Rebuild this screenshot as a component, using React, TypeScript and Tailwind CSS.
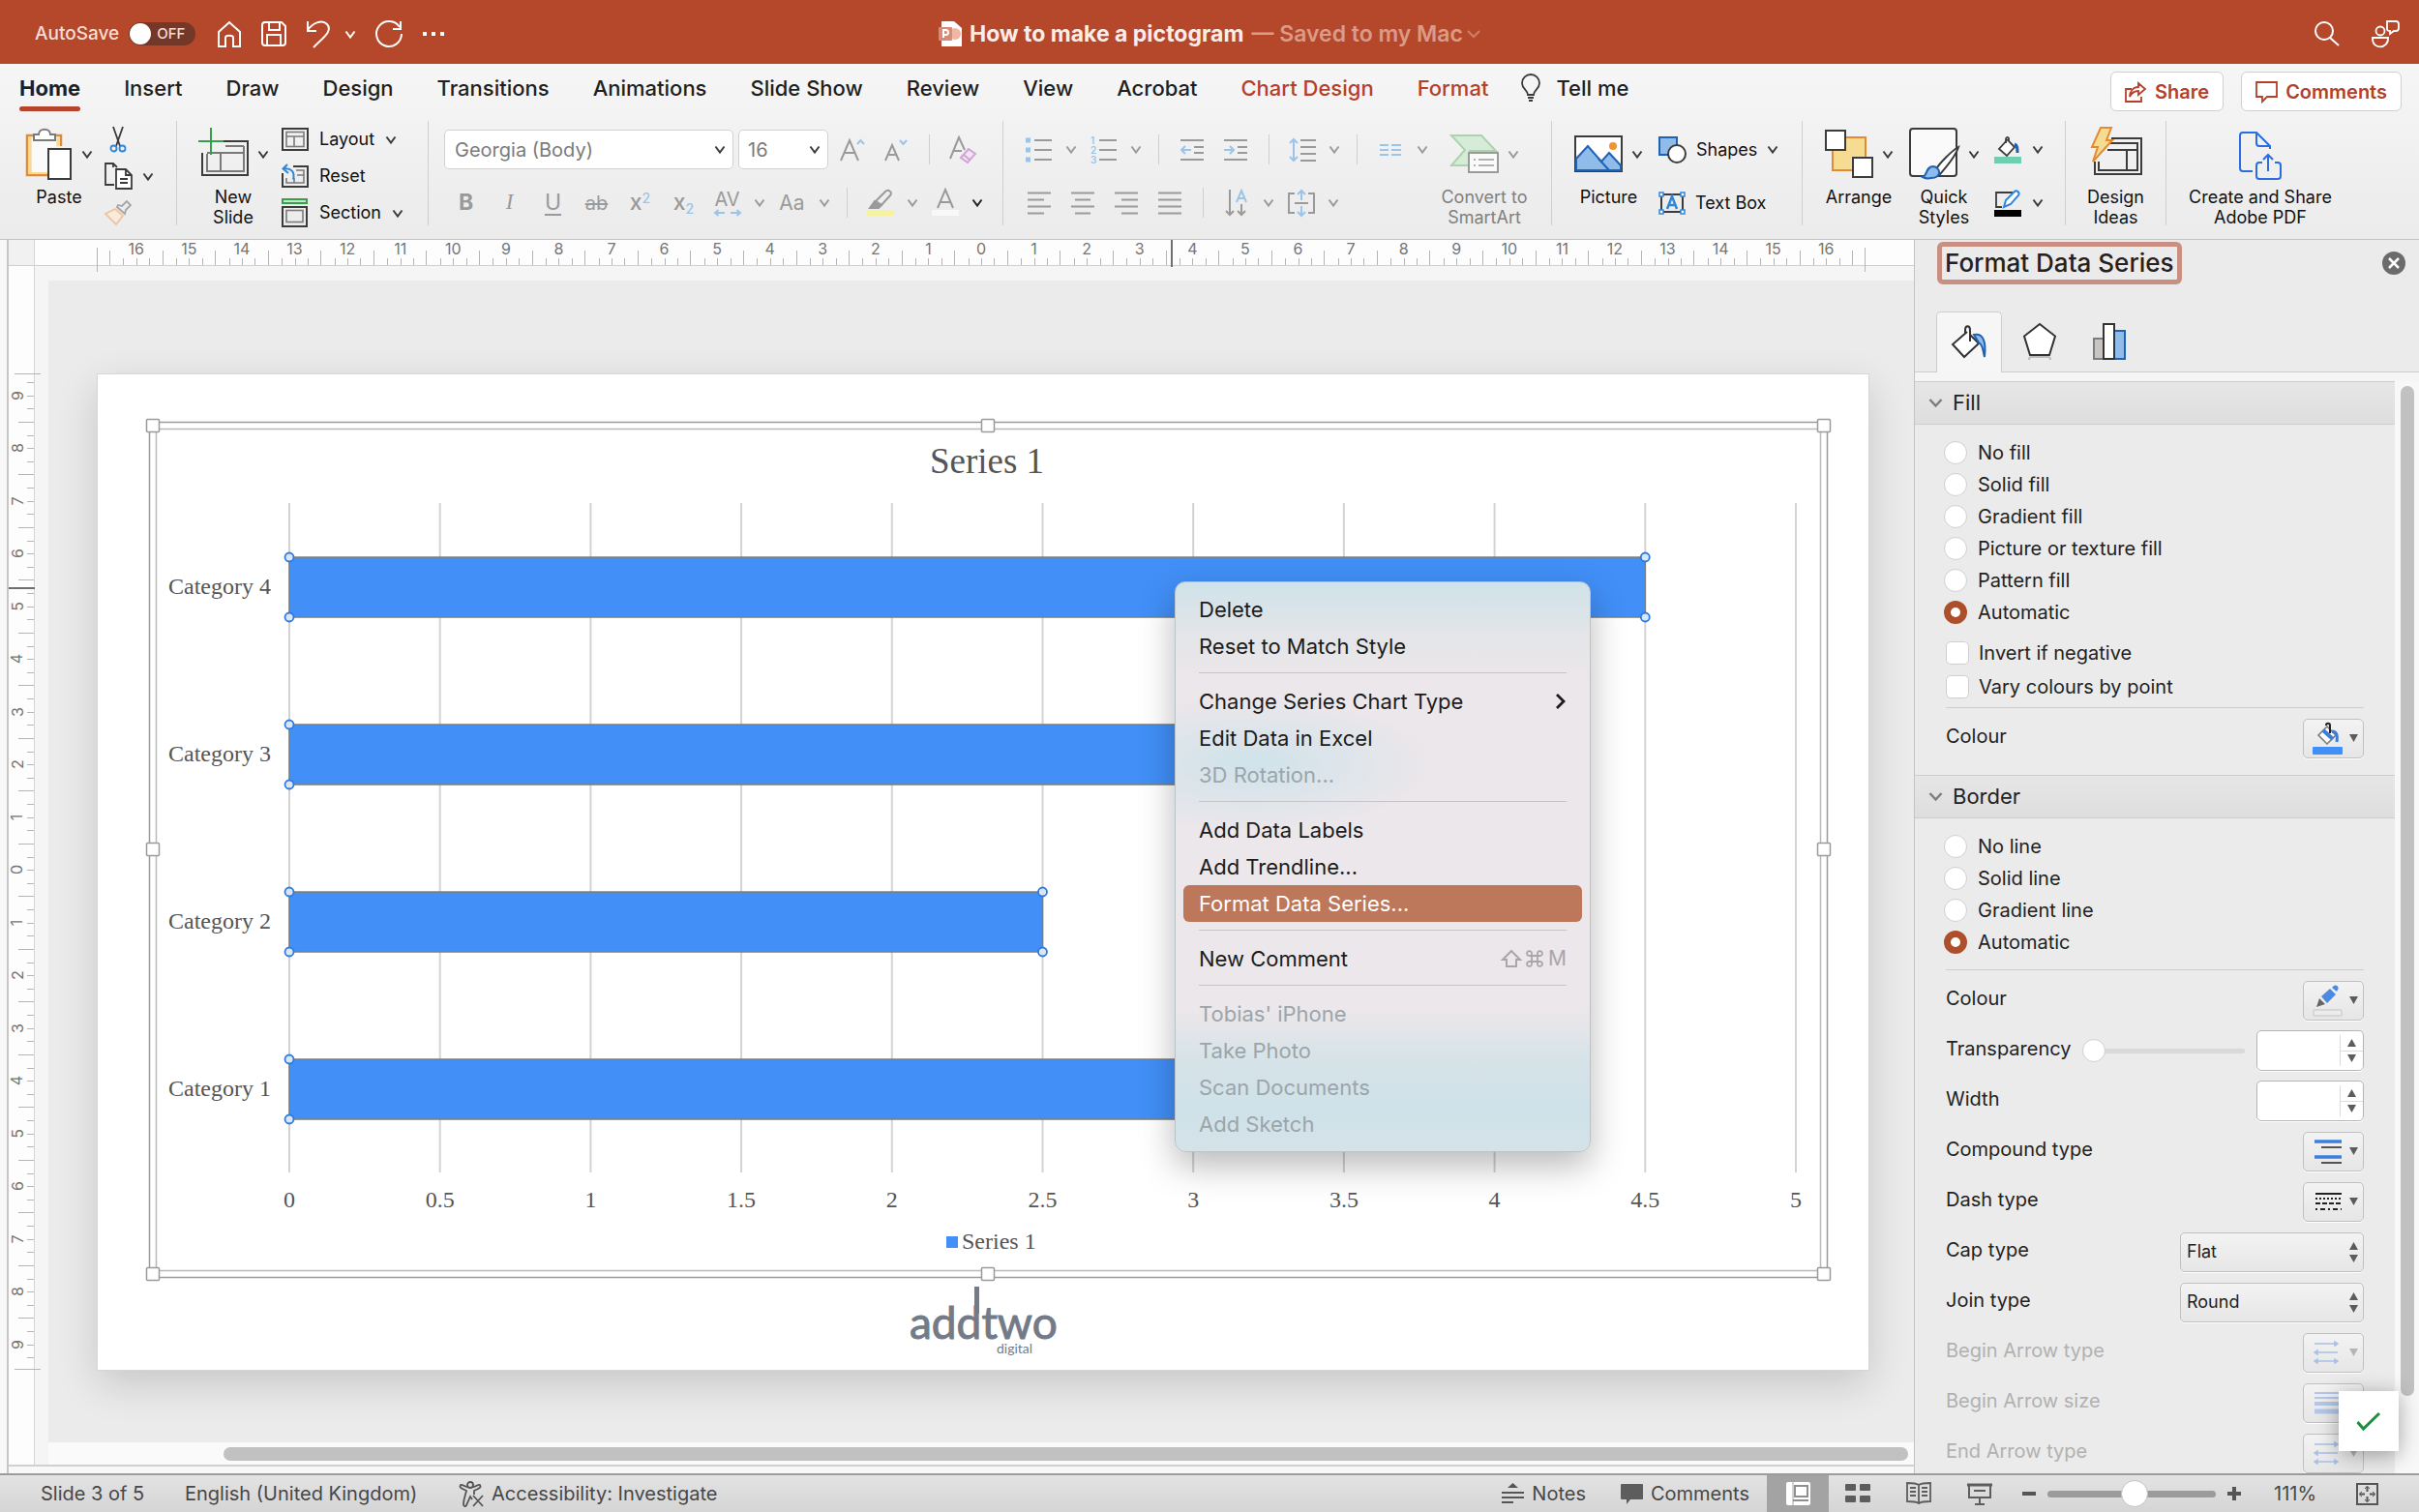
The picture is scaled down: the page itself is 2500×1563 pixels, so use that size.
import { useState, ReactNode } from 'react';

const tabs = [
  'Home', 'Insert', 'Draw', 'Design', 'Transitions', 'Animations', 'Slide Show',
  'Review', 'View', 'Acrobat', 'Chart Design', 'Format',
];

const hNumbers = Array.from({ length: 33 }, (_, i) => Math.abs(i - 16));
const vNumbers = Array.from({ length: 19 }, (_, i) => Math.abs(i - 9));

interface IconProps {
  w: number;
  h: number;
  stroke?: string;
  sw?: number;
  children: ReactNode;
}

function Icon({ w, h, stroke = '#3b3b3b', sw = 2, children }: IconProps) {
  return (
    <svg width={w} height={h} viewBox={`0 0 ${w} ${h}`} fill="none" stroke={stroke} strokeWidth={sw} className="shrink-0 overflow-visible" aria-hidden="true">
      {children}
    </svg>
  );
}

function Caret({ color = '#3b3b3b' }: { color?: string }) {
  return (
    <Icon w={12} h={9} stroke={color} sw={2}>
      <path d="M1.5 1.5 6 7.5l4.5-6" />
    </Icon>
  );
}

/* ---------- Ribbon building blocks ---------- */

function Separator() {
  return <div className="h-[108px] w-px shrink-0 bg-[#cfcfcf]" />;
}

function BigTool({ icon, label, caret = true, dim = false, className }: {
  icon: ReactNode; label: ReactNode; caret?: boolean; dim?: boolean; className: string;
}) {
  return (
    <button className={`flex shrink-0 flex-col items-center text-lg leading-[21px] ${dim ? 'text-[#808080]' : 'text-[#111]'} ${className}`}>
      <span className="flex h-[68px] items-center gap-[9px]">
        {icon}
        {caret && <Caret color={dim ? '#9a9a9a' : '#3b3b3b'} />}
      </span>
      <span>{label}</span>
    </button>
  );
}

function Slot({ label, children }: { label: string; children: ReactNode }) {
  return <button aria-label={label} className="flex h-full w-[45px] shrink-0 items-center justify-center">{children}</button>;
}

function CaretSlot({ color = '#9a9a9a' }: { color?: string }) {
  return <span className="flex w-[22px] shrink-0 justify-center"><Caret color={color} /></span>;
}

function MiniSep() {
  return <span className="flex w-6 shrink-0 justify-center"><span className="h-[31px] w-px bg-[#cfcfcf]" /></span>;
}

function AlignIcon({ lines }: { lines: [number, number][] }) {
  return (
    <Icon w={26} h={24} stroke="#9a9a9a">
      {lines.map(([a, b], i) => <path key={i} d={`M${a} ${i * 7 + 1.5}H${b}`} />)}
    </Icon>
  );
}

function LayoutIcon() {
  return (
    <Icon w={28} h={24}>
      <rect x="1" y="1" width="26" height="22" />
      <g stroke="#7a7a7a" strokeWidth="1.6"><rect x="5" y="4.500" width="18" height="15" /><path d="M5 9h18M13 9v10" /></g>
    </Icon>
  );
}

function ResetIcon() {
  return (
    <Icon w={28} h={26}>
      <path d="M12 3h15v21H1V10" />
      <g stroke="#7a7a7a" strokeWidth="1.6"><path d="M15 7h8v13H5v-5M16 12h7M13 15v5" /></g>
      <path d="M6 1 1.500 5.500 7 10M2 5.500c8-1 12 3 10 11" stroke="#2f86d6" />
    </Icon>
  );
}

function SectionIcon() {
  return (
    <Icon w={28} h={30}>
      <rect x="1" y="1" width="25" height="4" stroke="#35a04a" fill="#c4e6c9" />
      <rect x="1" y="9" width="25" height="20" />
      <rect x="5" y="12.500" width="17" height="12" stroke="#7a7a7a" strokeWidth="1.6" />
    </Icon>
  );
}

function ClipboardSection() {
  return (
    <div className="flex w-[182px] shrink-0 pl-[18px]">
      <BigTool
        className="w-[86px]"
        label="Paste"
        icon={
          <Icon w={49} h={54}>
            <path d="M8 8H2v41h22M32 8h5v11" stroke="#e38b31" strokeWidth="2.500" />
            <path d="M5 10v36h18M34 11v8" stroke="#f6dc93" strokeWidth="3" />
            <path d="M7 11h25v9H23v26H7z" fill="#fafafa" stroke="none" />
            <path d="M9 13V7h5c0-7 12-7 12 0h5v6z" fill="#fff" stroke="#7a7a7a" />
            <rect x="24" y="22" width="23" height="31" fill="#fff" />
          </Icon>
        }
      />
      <div className="flex flex-col pl-1">
        <button aria-label="Cut" className="flex h-[38px] w-[28px] items-center justify-center">
          <Icon w={18} h={28} sw={1.8}>
            <path d="M4 1l7 20M14 1 7 21" />
            <circle cx="4.500" cy="23.500" r="3" stroke="#2f86d6" /><circle cx="13.500" cy="23.500" r="3" stroke="#2f86d6" />
          </Icon>
        </button>
        <button aria-label="Copy" className="flex h-[38px] items-center gap-[9px]">
          <Icon w={30} h={28} sw={1.8}>
            <path d="M10 23H1V1h8l4 4M9 1v4" />
            <path d="M12 7h10l6 6v14H12zM22 7v6h6M16 17h8M16 21h8" fill="#fff" />
          </Icon>
          <Caret />
        </button>
        <button aria-label="Format painter" className="flex h-[38px] w-[28px] items-center justify-center">
          <Icon w={28} h={26} stroke="#a5a5a5" sw={1.8}>
            <path d="m13 7 8 7 1-4 5-5-4-4-5 5-4-1z" />
            <path d="M11 9 1 14l11 11 7-9z" stroke="#eec3a0" fill="#faead9" />
          </Icon>
        </button>
      </div>
    </div>
  );
}

function SlidesSection() {
  const rows = [
    { label: 'Layout', icon: <LayoutIcon />, caret: true },
    { label: 'Reset', icon: <ResetIcon />, caret: false },
    { label: 'Section', icon: <SectionIcon />, caret: true },
  ];

  return (
    <div className="flex w-[259px] shrink-0 pl-2">
      <BigTool
        className="w-[100px]"
        label={<>New<br />Slide</>}
        icon={
          <Icon w={52} h={48}>
            <path d="M26 11h25v35H4V23" />
            <path d="M28 16h19M9 24v18h38V16M9 23h38M23 24v18" stroke="#7a7a7a" />
            <path d="M13 -3v28M0 11h26" stroke="#35a04a" />
          </Icon>
        }
      />
      <div className="flex flex-col">
        {rows.map((row) => (
          <button key={row.label} className="flex h-[38px] items-center gap-[11px] text-lg text-[#111]">
            {row.icon}
            {row.label}
            {row.caret && <Caret />}
          </button>
        ))}
      </div>
    </div>
  );
}

function FontSection() {
  return (
    <div className="flex w-[593px] shrink-0 flex-col gap-[14px] pt-[9px] pl-4 text-[#9a9a9a]">
      <div className="flex h-[41px] items-center">
        <div className="flex gap-[5px] pr-[2px]">
          <div className="relative">
            <select aria-label="Font" className="h-[41px] w-[299px] appearance-none rounded-[5px] border border-[#d2d2d2] bg-white pl-[10px] text-xl text-[#7b7b7b]">
              <option>Georgia (Body)</option>
            </select>
            <span className="pointer-events-none absolute top-4 right-2"><Caret /></span>
          </div>
          <div className="relative">
            <select aria-label="Font size" className="h-[41px] w-[93px] appearance-none rounded-[5px] border border-[#d2d2d2] bg-white pl-[9px] text-xl text-[#7b7b7b]">
              <option>16</option>
            </select>
            <span className="pointer-events-none absolute top-4 right-2"><Caret /></span>
          </div>
        </div>
        <Slot label="Increase font size">
          <Icon w={26} h={24} stroke="#9a9a9a"><path d="M1 23 10 2l9 21M4 15h12" /><path d="m18 6 3.500-4L25 6" stroke="#9cc4e8" /></Icon>
        </Slot>
        <Slot label="Decrease font size">
          <Icon w={24} h={24} stroke="#9a9a9a"><path d="M1 23 8 7l7 16M4 17h8" /><path d="m16 2 3.500 4L23 2" stroke="#9cc4e8" /></Icon>
        </Slot>
        <MiniSep />
        <Slot label="Clear formatting">
          <Icon w={28} h={28} stroke="#9a9a9a"><path d="M1 23 10 1l6 13M4 15h9" /><path d="m12 22 8-9 7 5-8 9zM15 19l6 5" stroke="#cfa5d6" fill="#f3e3f5" /></Icon>
        </Slot>
      </div>
      <div className="flex h-[41px] items-center text-[23px]">
        <Slot label="Bold"><b>B</b></Slot>
        <Slot label="Italic"><i className="font-['Liberation_Serif']">I</i></Slot>
        <Slot label="Underline"><u className="underline-offset-4">U</u></Slot>
        <Slot label="Strikethrough"><s className="text-xl">ab</s></Slot>
        <Slot label="Superscript"><span className="font-medium">x<sup className="text-sm text-[#9cc4e8]">2</sup></span></Slot>
        <Slot label="Subscript"><span className="font-medium">x<sub className="text-sm text-[#9cc4e8]">2</sub></span></Slot>
        <Slot label="Character spacing">
          <span className="flex flex-col items-center text-xl leading-5">
            AV
            <Icon w={28} h={8} stroke="#9cc4e8"><path d="M1 4h10M17 4h10M4.500 1 1 4l3.500 3M23.500 1 27 4l-3.500 3" /></Icon>
          </span>
        </Slot>
        <CaretSlot />
        <Slot label="Change case"><span className="text-[21px]">Aa</span></Slot>
        <CaretSlot />
        <MiniSep />
        <Slot label="Highlight">
          <Icon w={28} h={28} stroke="#9a9a9a"><path d="m9 12 10-10c3-3 8 1 5 4L15 16z" /><path d="M8 12 3 19h9l3-3z" fill="#9a9a9a" /><rect x="0" y="21" width="28" height="6" fill="#f5f3a0" stroke="none" /></Icon>
        </Slot>
        <CaretSlot />
        <Slot label="Font colour">
          <Icon w={28} h={28} stroke="#9a9a9a"><path d="M6 19 14 0l8 19M9 13h10" /><rect x="0" y="21" width="28" height="6" fill="#f8f8f8" stroke="none" /></Icon>
        </Slot>
        <CaretSlot color="#222" />
      </div>
    </div>
  );
}

function ParagraphSection() {
  return (
    <div className="flex w-[566px] shrink-0 pl-[14px]">
      <div className="flex w-[433px] flex-col gap-[14px] pt-[9px]">
        <div className="flex h-[41px] items-center">
          <Slot label="Bullets">
            <Icon w={27} h={26} stroke="#9a9a9a"><path d="M9 3h18M9 13h18M9 23h18" /><path d="M0 3h5M0 13h5M0 23h5" stroke="#9cc4e8" strokeWidth="5" /></Icon>
          </Slot>
          <CaretSlot />
          <Slot label="Numbering">
            <Icon w={27} h={28} stroke="#9a9a9a">
              <path d="M9 4h18M9 14h18M9 24h18" />
              <g fill="#9cc4e8" stroke="none" className="text-[10px] font-semibold"><text x="0" y="8">1</text><text x="0" y="18">2</text><text x="0" y="28">3</text></g>
            </Icon>
          </Slot>
          <CaretSlot />
          <MiniSep />
          <Slot label="Decrease indent">
            <Icon w={24} h={24} stroke="#9a9a9a"><path d="M0 2h24M14 9h10M14 15h10M0 22h24" /><path d="M1 12h10M5 8l-4 4 4 4" stroke="#9cc4e8" /></Icon>
          </Slot>
          <Slot label="Increase indent">
            <Icon w={24} h={24} stroke="#9a9a9a"><path d="M0 2h24M14 9h10M14 15h10M0 22h24" /><path d="M0 12h10M6 8l4 4-4 4" stroke="#9cc4e8" /></Icon>
          </Slot>
          <MiniSep />
          <Slot label="Line spacing">
            <Icon w={28} h={26} stroke="#9a9a9a"><path d="M12 3h16M12 10h16M12 17h16M12 24h16" /><path d="M5 2v22M1 6l4-4 4 4M1 20l4 4 4-4" stroke="#9cc4e8" /></Icon>
          </Slot>
          <CaretSlot />
          <MiniSep />
          <Slot label="Columns">
            <Icon w={22} h={14} stroke="#9cc4e8"><path d="M0 2h9M12 2h10M0 7h9M12 7h10M0 12h9M12 12h10" /></Icon>
          </Slot>
          <CaretSlot />
        </div>
        <div className="flex h-[41px] items-center">
          <Slot label="Align left"><AlignIcon lines={[[1, 25], [1, 18], [1, 25], [1, 18]]} /></Slot>
          <Slot label="Align centre"><AlignIcon lines={[[1, 25], [5, 21], [1, 25], [5, 21]]} /></Slot>
          <Slot label="Align right"><AlignIcon lines={[[1, 25], [8, 25], [1, 25], [8, 25]]} /></Slot>
          <Slot label="Justify"><AlignIcon lines={[[1, 25], [1, 25], [1, 25], [1, 25]]} /></Slot>
          <MiniSep />
          <Slot label="Text direction">
            <Icon w={24} h={28} stroke="#9a9a9a"><path d="M5 0v26M1 22l4 4 4-4M17 15v11M13 22l4 4 4-4" /><path d="m12 13 5-12 5 12M14 9h6" stroke="#9cc4e8" /></Icon>
          </Slot>
          <CaretSlot />
          <Slot label="Align text">
            <Icon w={28} h={28} stroke="#9a9a9a"><path d="M7 4H1v20h6M21 4h6v20h-6M7 14h14" /><path d="M14 1v10M10 5l4-4 4 4M14 17v10M10 23l4 4 4-4" stroke="#9cc4e8" /></Icon>
          </Slot>
          <CaretSlot />
        </div>
      </div>
      <BigTool
        className="w-[100px]"
        dim
        label={<>Convert to<br />SmartArt</>}
        icon={
          <Icon w={50} h={40} stroke="#9a9a9a">
            <path d="M1 1h31l15 16H20v15H1l14-16z" fill="#d7ecd8" stroke="#acd3ae" />
            <rect x="19" y="19" width="30" height="20" fill="#fafafa" />
            <path d="M24 26h2M29 26h16M24 32h2M29 32h16" strokeWidth="1.500" />
          </Icon>
        }
      />
    </div>
  );
}

function InsertSection() {
  return (
    <div className="flex w-[258px] shrink-0 pl-[7px]">
      <BigTool
        className="w-[103px]"
        label="Picture"
        icon={
          <Icon w={50} h={38}>
            <rect x="1" y="1" width="48" height="36" fill="#fff" />
            <path d="M2 24 14 11l14 16 8-9 12 13v5H2z" fill="#8fbce8" stroke="#1f62b5" />
            <path d="m25 24 11 12" stroke="#1f62b5" />
            <circle cx="40" cy="11" r="4" fill="#f09432" stroke="none" />
          </Icon>
        }
      />
      <div className="flex flex-col gap-[14px] pt-[9px]">
        <button className="flex h-[41px] items-center gap-[10px] text-lg text-[#111]">
          <Icon w={29} h={28}>
            <rect x="1" y="1" width="18" height="18" fill="#8fbce8" stroke="#1f62b5" />
            <circle cx="19" cy="18" r="9" fill="#fff" />
          </Icon>
          Shapes
          <Caret />
        </button>
        <button className="flex h-[41px] items-center gap-[10px] text-lg text-[#111]">
          <Icon w={28} h={24}>
            <rect x="3" y="3" width="22" height="18" />
            <path d="m9 18 5-13 5 13M11 14h6" stroke="#2f86d6" strokeWidth="2.500" />
            <g fill="#fff" stroke="#2f86d6" strokeWidth="1.5"><rect x="1" y="1" width="4" height="4" /><rect x="23" y="1" width="4" height="4" /><rect x="1" y="19" width="4" height="4" /><rect x="23" y="19" width="4" height="4" /></g>
          </Icon>
          Text Box
        </button>
      </div>
    </div>
  );
}

function DrawingSection() {
  return (
    <div className="flex w-[271px] shrink-0 pl-2">
      <BigTool
        className="w-[100px]"
        label="Arrange"
        icon={
          <Icon w={50} h={50}>
            <rect x="8" y="8" width="34" height="34" fill="#f6dc93" stroke="#e38b31" />
            <rect x="1" y="1" width="20" height="20" fill="#fff" /><rect x="29" y="29" width="20" height="20" fill="#fff" />
          </Icon>
        }
      />
      <BigTool
        className="w-[76px]"
        label={<>Quick<br />Styles</>}
        icon={
          <Icon w={52} h={54}>
            <rect x="1" y="1" width="48" height="49" rx="3" fill="#fafafa" />
            <path d="M51 20C44 24 32 36 27 44l5 4C39 40 48 30 51 20z" fill="#fff" />
            <path d="M14 51c5-1 3-11 11-11 8 1 9 12-2 12-4 1-7 0-9-1z" fill="#8fbce8" stroke="#1f62b5" />
          </Icon>
        }
      />
      <div className="flex flex-col gap-[14px] pt-[9px] pl-[14px]">
        <button aria-label="Shape fill" className="flex h-[41px] items-center gap-[11px]">
          <Icon w={28} h={28}>
            <path d="M14 3 5 13l8 7 8-9-6-6V2c-1-2-3-1-3 1v4" fill="#fff" strokeWidth="1.800" />
            <path d="M21 8c3 1 3 4 3 9" stroke="#1f62b5" strokeWidth="3" />
            <rect x="0" y="21" width="28" height="7" fill="#6fcfb2" stroke="none" />
          </Icon>
          <Caret />
        </button>
        <button aria-label="Shape outline" className="flex h-[41px] items-center gap-[11px]">
          <Icon w={28} h={28}>
            <path d="M19 3H2v15h6" strokeWidth="1.800" />
            <path d="m10 18 2-7 9-9c2-2 6 1 4 4l-8 9z" fill="#fff" stroke="#2f86d6" />
            <rect x="0" y="21" width="28" height="7" fill="#000" stroke="none" />
          </Icon>
          <Caret />
        </button>
      </div>
    </div>
  );
}

function Ribbon() {
  const [activeTab, setActiveTab] = useState('Home');

  return (
    <div className="shrink-0 border-b border-[#c3c3c3] bg-gradient-to-b from-[#f7f6f6] to-[#ebebeb]">
      <div className="flex h-[59px] items-start justify-between pr-[18px] pl-5">
        <div className="flex gap-[34px] text-[22px] leading-[28px] font-medium text-[#1f1f1f]">
          <div className="flex gap-[45px]">
            {tabs.map((tab) => (
              <button key={tab} onClick={() => setActiveTab(tab)} className="flex flex-col gap-[5px] pt-[11px]">
                <span className={tab === 'Home' ? 'font-bold' : tab === 'Chart Design' || tab === 'Format' ? 'text-[#b5402a]' : ''}>{tab}</span>
                {tab === activeTab && <span className="h-[5px] w-full rounded-full bg-[#b5452a]" />}
              </button>
            ))}
          </div>
          <button className="flex items-center gap-4 self-start pt-[11px]">
            <Icon w={20} h={28} sw={1.8}>
              <path d="M7 21c0-5-6-6-6-12a9 9 0 0 1 18 0c0 6-6 7-6 12zM7 24h6M8 27h4" />
            </Icon>
            Tell me
          </button>
        </div>
        <div className="flex gap-[18px] pt-2 text-xl font-semibold text-[#b5402a]">
          <button className="flex h-[41px] items-center gap-[9px] rounded-md border border-[#cfcfcf] bg-white px-[14px]">
            <Icon w={22} h={22} stroke="#b5402a" sw={1.8}><path d="M7 8H1v13h16v-5M14 2l7 6-7 6v-4c-5 0-7 2-9 6 0-6 4-10 9-10z" /></Icon>
            Share
          </button>
          <button className="flex h-[41px] items-center gap-2 rounded-md border border-[#cfcfcf] bg-white px-[14px]">
            <Icon w={23} h={22} stroke="#b5402a" sw={1.8}><path d="M1 1h21v15H12l-5 5v-5H1z" /></Icon>
            Comments
          </button>
        </div>
      </div>

      <div className="flex h-[122px] items-start">
        <ClipboardSection />
        <Separator />
        <SlidesSection />
        <Separator />
        <FontSection />
        <Separator />
        <ParagraphSection />
        <Separator />
        <InsertSection />
        <Separator />
        <DrawingSection />
        <Separator />
        <BigTool
          className="w-[103px]"
          caret={false}
          label={<>Design<br />Ideas</>}
          icon={
            <Icon w={54} h={48}>
              <path d="M22 8h31v37H5V32" /><path d="M20 13h29v28H9V32M18 20h31M38 20v21" />
              <path d="M11 -3h11l-5 13h6L3 32l5-15H2z" fill="#f6dc93" stroke="#e38b31" />
            </Icon>
          }
        />
        <Separator />
        <BigTool
          className="w-[194px]"
          caret={false}
          label={<>Create and Share<br />Adobe PDF</>}
          icon={
            <Icon w={44} h={46} stroke="#2b6de0">
              <path d="M14 41H4c-2 0-3-1-3-3V4c0-2 1-3 3-3h14l14 14v3M18 1v11c0 2 1 3 3 3h11" />
              <path d="M24 32h-3c-2 0-3 1-3 3v11c0 2 1 3 3 3h19c2 0 3-1 3-3V35c0-2-1-3-3-3h-3M30 41V24M25 29l5-5 5 5" />
            </Icon>
          }
        />
      </div>
    </div>
  );
}

function TitleBar() {
  return (
    <header className="relative flex h-[66px] shrink-0 items-center justify-between bg-[#b5482a] pt-1 pr-5 pl-9 text-[19px] font-medium text-[#f6ddd5]">
      <div className="flex items-center">
        <span>AutoSave</span>
        <button role="switch" aria-checked="false" aria-label="AutoSave" className="ml-[10px] flex h-6 w-[69px] items-center gap-[6px] rounded-full bg-[#743829] pl-px text-[15px]">
          <span className="size-[22px] rounded-full bg-white" />
          OFF
        </button>
        <div className="ml-[22px] flex items-center gap-5">
          <Icon w={26} h={28} stroke="#fff"><path d="M2 12 13 2l11 10v15h-7v-9c0-3-8-3-8 0v9H2z" /></Icon>
          <Icon w={26} h={26} stroke="#fff"><path d="M1 4c0-2 1-3 3-3h17l4 4v17c0 2-1 3-3 3H4c-2 0-3-1-3-3zM8 1v8h11V1M6 25V14h14v11" /></Icon>
          <span className="flex items-center gap-[14px]">
            <Icon w={26} h={30} stroke="#fff"><path d="M2 2v10h9M2 11C8 3 17 0 22 5c6 7-3 13-14 24" /></Icon>
            <Caret color="#fff" />
          </span>
          <Icon w={28} h={30} stroke="#fff"><path d="M26 2v8h-8M25 8A13 13 0 1 0 27 15" /></Icon>
          <Icon w={24} h={6} stroke="#fff"><path d="M1 3h4M10 3h4M19 3h4" strokeWidth="4" /></Icon>
        </div>
      </div>
      <h1 className="pointer-events-none absolute inset-x-0 flex items-center justify-center gap-2 text-[23px] font-bold text-[#fbece7]">
        <Icon w={24} h={26}>
          <path d="M3 0h13l8 7v19H3z" fill="#fff" stroke="none" />
          <circle cx="17" cy="13" r="6" fill="#f0b7a5" stroke="none" />
          <rect x="0" y="6" width="14" height="14" rx="1" fill="#d98a74" stroke="none" />
          <path d="M5 17V9h2.500a2.500 2.500 0 0 1 0 5H5" stroke="#fff" />
        </Icon>
        How to make a pictogram
        <span className="flex items-center gap-1 font-semibold text-[#dc9a87]">
          — Saved to my Mac
          <Icon w={14} h={10} stroke="#cf7f69"><path d="m1 2 6 6 6-6" /></Icon>
        </span>
      </h1>
      <div className="flex items-center gap-8">
        <Icon w={26} h={26} stroke="#fff"><circle cx="10" cy="10" r="9" /><path d="m16 17 9 8" /></Icon>
        <Icon w={30} h={30} stroke="#fff" sw={1.8}>
          <circle cx="10" cy="12" r="4.500" /><path d="M2 19h16c1 12-17 13-16 0zM17 2h9c2 0 3 1 3 3v4c0 2-1 3-3 3h-2l-4 3v-3c-3 0-3-1-3-3z" />
        </Icon>
      </div>
    </header>
  );
}

/* ---------- Rulers ---------- */

function HorizontalRuler() {
  return (
    <div className="relative flex h-[27px] shrink-0 border-b border-[#cfcfcf] bg-[#fdfdfd]">
      <div className="h-full w-[27px] shrink-0 border-r border-[#d5d5d5] bg-[#f1f1f1]" />
      <div className="flex flex-1 pr-[63px] pl-[77px]">
        {hNumbers.map((n, i) => (
          <div key={i} className="flex flex-1 flex-col items-center justify-between border-l border-[#b5b5b5] text-base leading-[18px] text-[#757575] [border-image:linear-gradient(transparent_42%,#b5b5b5_42%)_1]">
            {n}
            <div className="grid h-[7px] w-full grid-cols-4">
              <span /><span className="border-l border-[#b5b5b5]" /><span className="border-l border-[#b5b5b5]" /><span className="border-l border-[#b5b5b5]" />
            </div>
          </div>
        ))}
        <span className="h-[15px] w-px self-end bg-[#b5b5b5]" />
      </div>
      {/* slide edges and pointer position */}
      <span className="absolute top-2 left-[91px] h-[25px] w-px bg-[#b5b5b5]" />
      <span className="absolute top-2 right-[50px] h-[25px] w-px bg-[#b5b5b5]" />
      <span className="absolute top-0 left-[1201px] h-[28px] w-[2px] bg-[#6e6e6e]" />
    </div>
  );
}

function VerticalRuler() {
  return (
    <div className="relative w-[27px] shrink-0 border-r border-[#d5d5d5] bg-[#fdfdfd] pt-[106px]">
      {vNumbers.map((n, i) => (
        <div key={i} className="grid h-[55px] grid-cols-[17px_7px] items-stretch justify-between even:h-[54px]">
          <span className="flex items-center justify-center">
            <span className="-rotate-90 text-base leading-[18px] text-[#757575]">{n}</span>
          </span>
          <div className="relative grid grid-rows-4">
            {i > 0 && <span className="absolute top-0 right-0 h-px w-4 bg-[#b5b5b5]" />}
            <span /><span className="border-t border-[#b5b5b5]" /><span className="border-t border-[#b5b5b5]" /><span className="border-t border-[#b5b5b5]" />
          </div>
        </div>
      ))}
      <span className="absolute top-[111px] left-[6px] h-px w-[27px] bg-[#b5b5b5]" />
      <span className="absolute top-[1140px] left-[6px] h-px w-[27px] bg-[#b5b5b5]" />
      <span className="absolute top-[332px] left-0 h-[2px] w-[27px] bg-[#6e6e6e]" />
    </div>
  );
}

/* ---------- Chart ---------- */

const bars = [
  { name: 'Category 4', value: 4.5 },
  { name: 'Category 3', value: 3.5 },
  { name: 'Category 2', value: 2.5 },
  { name: 'Category 1', value: 4.3 },
];
const axis = [0, 0.5, 1, 1.5, 2, 2.5, 3, 3.5, 4, 4.5, 5];

function Chart() {
  const x0 = 148;
  const unit = 311.4;
  const handles = [7, 870, 1734].flatMap((x) => [7, 445, 884].map((y) => [x, y])).filter(([x, y]) => !(x === 870 && y === 445));

  return (
    <svg viewBox="0 0 1742 892" className="w-full overflow-visible font-['Liberation_Serif',serif]" fill="#555" role="img" aria-label="Series 1 bar chart">
      <rect x="3.500" y="3.500" width="1734" height="884" fill="#fff" stroke="#9b9b9b" strokeWidth="1.5" />
      <rect x="10.500" y="10.500" width="1720" height="870" fill="#fff" stroke="#b9b9b9" strokeWidth="1.5" />
      {handles.map(([x, y]) => (
        <rect key={`${x}-${y}`} x={x - 6.5} y={y - 6.5} width="13" height="13" rx="1" fill="#fff" stroke="#9a9a9a" strokeWidth="1.5" />
      ))}

      <text x="869" y="56" textAnchor="middle" className="text-[37px]">Series 1</text>
      {axis.map((v) => (
        <g key={v}>
          <line x1={x0 + v * unit} x2={x0 + v * unit} y1="87" y2="779" stroke="#d3d3d3" strokeWidth="2" />
          <text x={x0 + v * unit} y="815" textAnchor="middle" className="text-2xl">{v}</text>
        </g>
      ))}
      {bars.map(({ name, value }, i) => {
        const y = 143 + i * 173;
        const w = value * unit;
        return (
          <g key={name}>
            <text x="129" y={y + 38} textAnchor="end" className="text-2xl">{name}</text>
            <rect x={x0} y={y} width={w} height="62" fill="#418ff7" stroke="#7c7f78" strokeWidth="1.5" />
            {[[0, 0], [w, 0], [0, 62], [w, 62]].map(([dx, dy]) => (
              <circle key={`${dx}-${dy}`} cx={x0 + dx} cy={y + dy} r="4.500" fill="#d8e6f7" stroke="#2f7ade" strokeWidth="1.800" />
            ))}
          </g>
        );
      })}
      <rect x="827" y="845" width="12" height="12" fill="#418ff7" />
      <text x="843" y="858" className="text-2xl">Series 1</text>
    </svg>
  );
}

function Logo() {
  return (
    <svg width="152" height="80" viewBox="0 0 152 80" fill="#727b87" className="overflow-visible" role="img" aria-label="addtwo digital">
      <text x="0" y="59" stroke="#727b87" strokeWidth="1" className="font-['Lato',sans-serif] text-[46px]">addtwo</text>
      <rect x="67" y="5" width="5" height="28" />
      <text x="90" y="74" className="font-['Lato',sans-serif] text-sm">digital</text>
    </svg>
  );
}

/* ---------- Context menu ---------- */

interface MenuItem {
  label: string;
  disabled?: boolean;
  active?: boolean;
  submenu?: boolean;
  shortcut?: boolean;
}

const menuGroups: MenuItem[][] = [
  [{ label: 'Delete' }, { label: 'Reset to Match Style' }],
  [{ label: 'Change Series Chart Type', submenu: true }, { label: 'Edit Data in Excel' }, { label: '3D Rotation...', disabled: true }],
  [{ label: 'Add Data Labels' }, { label: 'Add Trendline...' }, { label: 'Format Data Series...', active: true }],
  [{ label: 'New Comment', shortcut: true }],
  [
    { label: "Tobias' iPhone", disabled: true },
    { label: 'Take Photo', disabled: true },
    { label: 'Scan Documents', disabled: true },
    { label: 'Add Sketch', disabled: true },
  ],
];

function ContextMenu() {
  return (
    <div
      role="menu"
      className="absolute top-[214px] left-[1113px] w-[430px] rounded-[11px] border border-[#b9c3c8] bg-[radial-gradient(ellipse_45%_12%_at_18%_32%,#cfe3ea,transparent),linear-gradient(#cfe2ea,#e3e5e8_9%,#ece7ea_17%,#ece7ea_75%,#d6e3e8_84%,#cfe1e9_93%,#d5e3e8)] px-2 py-[9px] text-[22px] text-[#1b1b1b] shadow-[0_14px_36px_rgba(0,0,0,0.28)]"
    >
      {menuGroups.map((group, i) => (
        <div key={i}>
          {i > 0 && <div className="mx-4 mt-[9px] mb-[10px] h-px bg-[#c6c4c8] first:mt-2" />}
          {group.map((item) => (
            <button
              key={item.label}
              role="menuitem"
              disabled={item.disabled}
              className={`flex h-[38px] w-full items-center justify-between rounded-md px-4 ${
                item.active ? 'bg-[#bd775b] text-white' : item.disabled ? 'text-[#9ba5aa]' : ''
              }`}
            >
              {item.label}
              {item.submenu && <Icon w={12} h={18} stroke="#1b1b1b" sw={2.8}><path d="m2 2 7 7-7 7" /></Icon>}
              {item.shortcut && (
                <span className="flex items-center gap-[5px] text-[21px] text-[#a9a5a9]">
                  <Icon w={20} h={18} stroke="#a9a5a9"><path d="m10 1 9 9h-4v7H5v-7H1z" /></Icon>
                  <Icon w={18} h={18} stroke="#a9a5a9" sw={1.800}>
                    <path d="M6 6h6v6H6zM6 6H4a2.500 2.500 0 1 1 2-2zM12 6h2a2.500 2.500 0 1 0-2-2zM6 12H4a2.500 2.500 0 1 0 2 2zM12 12h2a2.500 2.500 0 1 1-2 2z" />
                  </Icon>
                  M
                </span>
              )}
            </button>
          ))}
        </div>
      ))}
    </div>
  );
}

function Editor() {
  return (
    <main className="flex min-w-0 flex-1 flex-col bg-[#f8f8f8] pl-[7px]">
      <div className="flex min-h-0 flex-1 flex-col border-l-2 border-[#c6c6c6]">
        <HorizontalRuler />
        <div className="flex min-h-0 flex-1 border-b-2 border-[#d0d0d0]">
          <VerticalRuler />
          <div className="flex min-w-0 flex-1 flex-col bg-[#f5f5f5] pt-[15px] pl-[14px]">
            <div className="min-h-0 flex-1 overflow-hidden bg-[#ebebeb] pt-[97px] pr-[47px] pl-[51px]">
              <div className="relative aspect-[1830/1029] w-full bg-white pt-[46px] shadow-[0_0_0_1px_#d6d6d6,0_14px_40px_rgba(0,0,0,0.16)]">
                <div className="pr-[38px] pl-[50px]">
                  <Chart />
                </div>
                <div className="flex justify-center">
                  <Logo />
                </div>
                <ContextMenu />
              </div>
            </div>
            <div className="flex h-[23px] shrink-0 items-center bg-[#fafafa] pr-[6px] pl-[181px]">
              <div className="h-[14px] w-full rounded-full bg-[#c1c1c1]" />
            </div>
          </div>
        </div>
        <div className="h-[7px] shrink-0" />
      </div>
    </main>
  );
}

/* ---------- Format pane ---------- */

function PaneHeader({ title }: { title: string }) {
  return (
    <button className="flex h-[45px] w-full items-center gap-[10px] border-y border-[#cdcdcd] bg-gradient-to-b from-[#e6e6e6] to-[#dedede] pl-[14px] text-[22px] text-[#222]">
      <Icon w={15} h={11} stroke="#7d7d7d" sw={2.500}><path d="m1.500 2 6 6.500 6-6.500" /></Icon>
      {title}
    </button>
  );
}

function RadioList({ name, options }: { name: string; options: string[] }) {
  const [value, setValue] = useState('Automatic');
  return (
    <div>
      {options.map((option) => (
        <label key={option} className="flex h-[33px] items-center gap-[11px]">
          <input
            type="radio"
            name={name}
            checked={value === option}
            onChange={() => setValue(option)}
            className="size-6 appearance-none rounded-full border border-[#cfcfcf] bg-white checked:border-[7px] checked:border-[#ad4f2a]"
          />
          {option}
        </label>
      ))}
    </div>
  );
}

function Row({ label, dim = false, children }: { label: string; dim?: boolean; children: ReactNode }) {
  return (
    <div className={`flex h-[52px] items-center justify-between ${dim ? 'text-[#b1b1b1]' : ''}`}>
      <span className="pb-1">{label}</span>
      {children}
    </div>
  );
}

function DropButton({ label, dim = false, children }: { label: string; dim?: boolean; children: ReactNode }) {
  return (
    <button aria-label={label} className="flex h-[41px] w-[63px] items-center justify-between rounded-[5px] border-[1.5px] border-[#c0c0c0] bg-gradient-to-b from-[#f3f3f3] to-[#e6e6e6] pr-[5px] pl-[9px] shadow-[0_1px_0_#fff]">
      {children}
      <Icon w={9} h={8}><path d="M0 0h9L4.500 8z" fill={dim ? '#b5b5b5' : '#5c5c5c'} stroke="none" /></Icon>
    </button>
  );
}

function Stepper({ label }: { label: string }) {
  return (
    <div className="flex h-[42px] w-[111px] rounded-[5px] border-[1.5px] border-[#b5b5b5] bg-white shadow-[0_1px_0_#fff]">
      <input aria-label={label} type="text" className="min-w-0 flex-1 bg-transparent px-2 outline-none" />
      <div className="my-1 flex w-6 flex-col border-l border-[#dcdcdc]">
        <button aria-label={`${label} up`} className="flex flex-1 items-center justify-center border-b border-[#dcdcdc]">
          <Icon w={9} h={8}><path d="M0 8h9L4.500 0z" fill="#5c5c5c" stroke="none" /></Icon>
        </button>
        <button aria-label={`${label} down`} className="flex flex-1 items-center justify-center">
          <Icon w={9} h={8}><path d="M0 0h9L4.500 8z" fill="#5c5c5c" stroke="none" /></Icon>
        </button>
      </div>
    </div>
  );
}

function PopUp({ label, value }: { label: string; value: string }) {
  return (
    <div className="relative">
      <select aria-label={label} className="h-[41px] w-[190px] appearance-none rounded-[5px] border-[1.5px] border-[#c0c0c0] bg-gradient-to-b from-[#f3f3f3] to-[#e6e6e6] pl-[6px] text-lg text-[#222] shadow-[0_1px_0_#fff]">
        <option>{value}</option>
      </select>
      <span className="pointer-events-none absolute top-[10px] right-[6px]">
        <Icon w={9} h={22}><path d="M0 8h9L4.500 0zM0 13h9l-4.500 8z" fill="#5c5c5c" stroke="none" /></Icon>
      </span>
    </div>
  );
}

function ArrowsIcon() {
  return (
    <Icon w={28} h={28} stroke="#a9c0e6" sw={1.500}>
      <path d="M2 5h22M4 14h22M4 23h20" />
      <path d="M23 3l3 2-3 2zM5 12l-3 2 3 2zM5 21l-3 2 3 2zM23 21l3 2-3 2z" fill="#a9c0e6" />
    </Icon>
  );
}

function FormatPane() {
  return (
    <aside className="flex w-[522px] shrink-0 flex-col border-l border-[#c3c3c3] bg-[#ebebeb] text-xl text-[#222]">
      <div className="flex h-[74px] shrink-0 items-start justify-between pt-[2px] pr-[14px] pl-[23px]">
        <h2 className="h-[44px] rounded-md border-[5px] border-[#c98f81] px-[3px] text-[26px] leading-[34px] font-medium">Format Data Series</h2>
        <button aria-label="Close" className="mt-[10px]">
          <Icon w={24} h={24} stroke="#fff" sw={2.500}><circle cx="12" cy="12" r="12" fill="#6b6b6b" stroke="none" /><path d="m7 7 10 10M17 7 7 17" /></Icon>
        </button>
      </div>
      <div className="flex h-[63px] shrink-0">
        <span className="w-[22px] border-b border-[#cdcdcd]" />
        <button aria-label="Fill and line" className="flex w-[68px] items-center justify-center rounded-t-[5px] border border-b-0 border-[#cdcdcd] bg-[#f6f6f6]">
          <Icon w={38} h={36} stroke="#333">
            <path d="M17 7 2 20l12 13 15-14-9-9" fill="#fff" />
            <path d="M20 17V5c0-5-5-5-5 0v3" />
            <path d="M24 10c9-2 13 6 11 23-2-6-1-12-6-15z" fill="#8fbce8" stroke="#1f62b5" />
          </Icon>
        </button>
        <div className="flex flex-1 items-center gap-[38px] border-b border-[#cdcdcd] pl-[22px]">
          <button aria-label="Effects">
            <Icon w={34} h={38} stroke="#333">
              <path d="M17 1 33 13.500 27 33H7L1 13.500z" fill="#fff" />
              <path d="M7 35h20M6 38c0-2 1-3 2-3M28 38c0-2-1-3-2-3" stroke="#bbb" />
            </Icon>
          </button>
          <button aria-label="Series options">
            <Icon w={34} h={38} stroke="#333">
              <rect x="1" y="16" width="11" height="21" fill="#c7c4c1" stroke="#7d7d7d" />
              <rect x="22" y="8" width="11" height="29" fill="#8fbce8" stroke="#1f62b5" />
              <rect x="11" y="1" width="11" height="36" fill="#fff" />
            </Icon>
          </button>
        </div>
      </div>
      <div className="h-[9px] shrink-0 bg-[#f5f5f5]" />

      <div className="flex min-h-0 flex-1 overflow-hidden">
        <div className="w-[496px] shrink-0">
          <PaneHeader title="Fill" />
          <div className="pr-8 pl-8">
            <div className="-ml-[2px] pt-3 pb-2">
              <RadioList name="fill" options={['No fill', 'Solid fill', 'Gradient fill', 'Picture or texture fill', 'Pattern fill', 'Automatic']} />
            </div>
            {['Invert if negative', 'Vary colours by point'].map((option) => (
              <label key={option} className="flex h-[35px] items-center gap-[10px]">
                <input type="checkbox" className="size-6 appearance-none rounded-[5px] border border-[#cfcfcf] bg-white" />
                {option}
              </label>
            ))}
            <div className="mt-1 mb-[5px] h-px bg-[#cdcdcd]" />
            <Row label="Colour">
              <DropButton label="Fill colour">
                <Icon w={31} h={34} sw={1.500}>
                  <path d="m15 5-9 9 9 9 9-9z" fill="#fff" stroke="#777" /><path d="m11 9 10 9" stroke="#3b7ddb" strokeWidth="4" />
                  <path d="M18 12V4c0-3-4-3-4 0" stroke="#222" strokeWidth="2" /><path d="M20 10c5 0 6 4 5 11" stroke="#3b7ddb" strokeWidth="3" />
                  <rect x="0" y="26" width="31" height="8" rx="1" fill="#418ff7" stroke="none" />
                </Icon>
              </DropButton>
            </Row>
          </div>
          <div className="h-3" />
          <PaneHeader title="Border" />
          <div className="pr-8 pl-8">
            <div className="-ml-[2px] pt-3 pb-3">
              <RadioList name="border" options={['No line', 'Solid line', 'Gradient line', 'Automatic']} />
            </div>
            <div className="mb-[5px] h-px bg-[#cdcdcd]" />
            <Row label="Colour">
              <DropButton label="Border colour">
                <Icon w={31} h={34} sw={1.500}>
                  <path d="m4 24 3-9 6 6z" fill="#666" stroke="none" /><path d="m9 13 9-8 6 6-9 9z" fill="#4b8ae0" stroke="none" />
                  <path d="m20 4 2-2c3-2 6 2 4 4l-1 2z" fill="#4b8ae0" stroke="none" />
                  <rect x="1" y="27" width="29" height="6" rx="1" fill="#ececec" stroke="#d0d0d0" />
                </Icon>
              </DropButton>
            </Row>
            <div className="flex h-[52px] items-center justify-between">
              <label htmlFor="transparency" className="pb-1">Transparency</label>
              <input
                id="transparency"
                type="range"
                defaultValue={0}
                className="w-[168px] appearance-none bg-transparent [&::-webkit-slider-runnable-track]:h-[5px] [&::-webkit-slider-runnable-track]:rounded-full [&::-webkit-slider-runnable-track]:bg-[#d9d9d9] [&::-webkit-slider-thumb]:mt-[-10px] [&::-webkit-slider-thumb]:size-6 [&::-webkit-slider-thumb]:appearance-none [&::-webkit-slider-thumb]:rounded-full [&::-webkit-slider-thumb]:border [&::-webkit-slider-thumb]:border-[#cfcfcf] [&::-webkit-slider-thumb]:bg-white"
              />
              <Stepper label="Transparency value" />
            </div>
            <Row label="Width"><Stepper label="Width" /></Row>
            <Row label="Compound type">
              <DropButton label="Compound type">
                <Icon w={31} h={28} stroke="#222" sw={1.500}>
                  <path d="M2 4h28M2 20h28" stroke="#3f7fdc" strokeWidth="3.500" /><path d="M9 10h21M9 26h21" />
                </Icon>
              </DropButton>
            </Row>
            <Row label="Dash type">
              <DropButton label="Dash type">
                <Icon w={31} h={24} stroke="#222">
                  <path d="M3 4h27" /><path d="M3 9h27" strokeDasharray="2 2" /><path d="M3 14h27" strokeDasharray="5 2" /><path d="M3 20h27" strokeDasharray="2 3 5 3" />
                </Icon>
              </DropButton>
            </Row>
            <Row label="Cap type"><PopUp label="Cap type" value="Flat" /></Row>
            <Row label="Join type"><PopUp label="Join type" value="Round" /></Row>
            <Row dim label="Begin Arrow type"><DropButton dim label="Begin Arrow type"><ArrowsIcon /></DropButton></Row>
            <Row dim label="Begin Arrow size">
              <DropButton dim label="Begin Arrow size">
                <Icon w={28} h={26} stroke="#b4c7e8"><path d="M2 3h25" /><path d="M2 8h25" /><path d="M2 14h25" strokeWidth="4" /><path d="M2 22h25" strokeWidth="5" /></Icon>
              </DropButton>
            </Row>
            <Row dim label="End Arrow type"><DropButton dim label="End Arrow type"><ArrowsIcon /></DropButton></Row>
          </div>
        </div>
        <div className="flex flex-1 justify-center bg-[#f8f8f8] pt-[5px]">
          <div className="h-[1044px] w-[14px] rounded-full bg-[#c1c1c1]" />
        </div>
      </div>
    </aside>
  );
}

/* ---------- Status bar ---------- */

function StatusBar() {
  return (
    <footer className="flex h-10 shrink-0 items-center justify-between border-t-2 border-[#9c9c9c] bg-gradient-to-b from-[#e3e3e3] to-[#d5d5d5] pr-[42px] pl-[42px] text-xl text-[#474747]">
      <div className="flex items-center">
        <span className="w-[149px]">Slide 3 of 5</span>
        <span className="w-[283px]">English (United Kingdom)</span>
        <button className="flex items-center gap-2">
          <Icon w={26} h={27} stroke="#555" sw={1.800}>
            <circle cx="12" cy="4" r="3" />
            <path d="M9 6C6 6 4 3 2 4c-2 3 2 4 6 6-1 5-3 9-3 14 0 2 2 3 3 1l4-9 2 3M15 6c3 0 5-3 7-2 2 3-2 4-6 6v4M15 15l10 11M25 15 15 26" />
          </Icon>
          Accessibility: Investigate
        </button>
      </div>
      <div className="flex h-full items-center">
        <button className="flex items-center gap-2">
          <Icon w={23} h={22} stroke="#555"><path d="M6 5h11l-5.500-5z" fill="#555" stroke="none" /><path d="M0 10h23M0 15h23M0 20h12" /></Icon>
          Notes
        </button>
        <button className="ml-9 flex items-center gap-2">
          <Icon w={23} h={21}><path d="M1 0h21c1 0 1 1 1 1v14c0 1-1 1-1 1H10l-4 5v-5H1c-1 0-1-1-1-1V1c0-1 1-1 1-1z" fill="#5d5d5d" stroke="none" /></Icon>
          Comments
        </button>
        <button aria-label="Normal view" className="ml-[18px] flex h-full w-16 items-center justify-center bg-[#a3a3a3]">
          <Icon w={25} h={24}>
            <rect x="0" y="0" width="25" height="24" rx="2" fill="#fff" stroke="none" />
            <path d="M7 0v24" stroke="#a3a3a3" strokeWidth="1" /><rect x="9" y="4" width="13" height="11" stroke="#8f8f8f" /><path d="M7 19h16" stroke="#8f8f8f" />
          </Icon>
        </button>
        <div className="flex items-center gap-[37px] pl-[17px]">
          <Icon w={26} h={20}><g fill="#5d5d5d" stroke="none"><rect width="11" height="7" rx="1" /><rect x="15" width="11" height="7" rx="1" /><rect y="12" width="11" height="7" rx="1" /><rect x="15" y="12" width="11" height="7" rx="1" /></g></Icon>
          <Icon w={26} h={24} stroke="#5d5d5d" sw={1.800}>
            <path d="M13 3C10 1 5 1 1 1v19c4 0 9 0 12 2 3-2 8-2 12-2V1c-4 0-9 0-12 2zM13 3v20M4 6h6M4 10h6M4 14h6M16 6h6M16 10h6M16 14h6" />
          </Icon>
          <Icon w={26} h={23} stroke="#5d5d5d"><path d="M0 2h26" strokeWidth="3" /><path d="M2 3v12h22V3M7 8h12M13 15v6M8 22h10" /></Icon>
        </div>
        <div className="ml-[31px] flex items-center gap-3">
          <Icon w={14} h={14} stroke="#555" sw={4}><path d="M0 7h14" /></Icon>
          <input
            type="range"
            aria-label="Zoom"
            defaultValue={52}
            className="w-[174px] appearance-none bg-transparent [&::-webkit-slider-runnable-track]:h-[7px] [&::-webkit-slider-runnable-track]:rounded-full [&::-webkit-slider-runnable-track]:bg-[#9b9b9b] [&::-webkit-slider-thumb]:mt-[-11px] [&::-webkit-slider-thumb]:size-7 [&::-webkit-slider-thumb]:appearance-none [&::-webkit-slider-thumb]:rounded-full [&::-webkit-slider-thumb]:border [&::-webkit-slider-thumb]:border-[#c4c4c4] [&::-webkit-slider-thumb]:bg-white"
          />
          <Icon w={14} h={14} stroke="#555" sw={4}><path d="M0 7h14M7 0v14" /></Icon>
        </div>
        <span className="ml-[34px] w-[85px]">111%</span>
        <Icon w={23} h={23} stroke="#555"><rect x="1" y="1" width="21" height="21" /><path d="M11.500 4v5M11.500 14v5M4 11.500h5M14 11.500h5" /><path d="m9 6 2.500-3L14 6M9 17l2.500 3 2.500-3M6 9l-3 2.500L6 14M17 9l3 2.500-3 2.500" strokeWidth="1" /></Icon>
      </div>
    </footer>
  );
}

export default function App() {
  return (
    <div className="relative flex h-screen flex-col overflow-hidden bg-[#ebebeb] font-['Inter',sans-serif]">
      <TitleBar />
      <Ribbon />
      <div className="flex min-h-0 flex-1">
        <Editor />
        <FormatPane />
      </div>
      <StatusBar />
      {/* Floating confirmation badge */}
      <div className="absolute right-[21px] bottom-[63px] flex size-[62px] items-center justify-center bg-white shadow-[0_4px_22px_rgba(0,0,0,0.35)]">
        <Icon w={26} h={20} stroke="#1e8e3e" sw={3}><path d="m1.500 11 6 7L24 2" /></Icon>
      </div>
    </div>
  );
}
